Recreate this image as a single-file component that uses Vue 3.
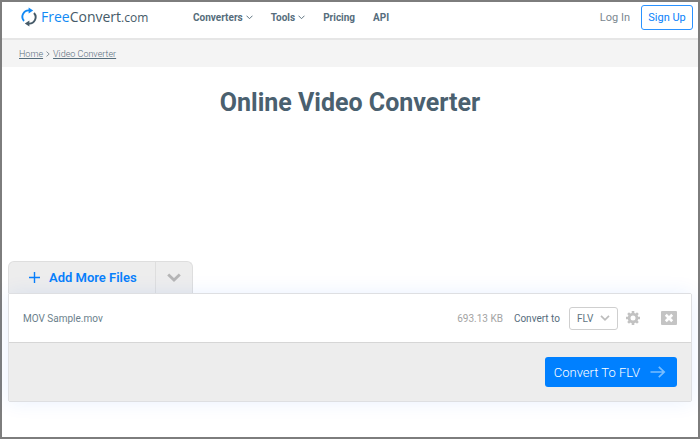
<script setup>
import { ref } from 'vue'

const menu = [
  { label: 'Converters', drop: true },
  { label: 'Tools', drop: true },
  { label: 'Pricing', drop: false },
  { label: 'API', drop: false },
]
const file = { name: 'MOV Sample.mov', size: '693.13 KB' }
const format = ref('FLV')
</script>

<template>
  <div class="page">
    <header class="header">
      <a class="logo" href="#">
        <svg class="logo-mark" width="16" height="20" viewBox="0 0 16 20">
          <path d="M3 14A6.4 6.4 0 0 1 8.4 3.4" fill="none" stroke="#128af5" stroke-width="1.9" />
          <path d="M7.6 0.4L12.2 3.4L7.6 6.4Z" fill="#128af5" />
          <path d="M13 6A6.4 6.4 0 0 1 7.6 16.6" fill="none" stroke="#455a68" stroke-width="1.9" />
          <path d="M8.4 13.6L3.8 16.6L8.4 19.6Z" fill="#455a68" />
        </svg>
        <span class="logo-text"><span class="free">Free</span>Convert<span class="com">.com</span></span>
      </a>
      <nav class="menu">
        <a v-for="item in menu" :key="item.label" href="#">
          {{ item.label }}
          <svg v-if="item.drop" width="7" height="5" viewBox="0 0 7 5">
            <path d="M0.5 0.7L3.5 3.7L6.5 0.7" fill="none" stroke="#607582" />
          </svg>
        </a>
      </nav>
      <div class="account">
        <a class="login" href="#">Log In</a>
        <button class="signup" type="button">Sign Up</button>
      </div>
    </header>

    <nav class="crumbs" aria-label="Breadcrumb">
      <a href="#">Home</a>
      <svg width="4" height="6" viewBox="0 0 4 6">
        <path d="M0.5 0.6L3.2 3L0.5 5.4" fill="none" stroke="#8b969d" />
      </svg>
      <a href="#">Video Converter</a>
    </nav>

    <main class="main">
      <h1>Online Video Converter</h1>
      <div class="panel">
        <div class="tab">
          <button class="add" type="button">
            <svg width="11" height="11" viewBox="0 0 11 11">
              <path d="M5.5 0V11M0 5.5H11" stroke="#087ffb" stroke-width="1.4" />
            </svg>
            Add More Files
          </button>
          <button class="more" type="button" aria-label="More sources">
            <svg width="14" height="9" viewBox="0 0 14 9">
              <path d="M1.2 1.4L7 7L12.8 1.4" fill="none" stroke="#b5b5b5" stroke-width="2.8" />
            </svg>
          </button>
        </div>
        <section class="card">
          <div class="file">
            <span class="name">{{ file.name }}</span>
            <span class="size">{{ file.size }}</span>
            <label for="format">Convert to</label>
            <span class="select">
              <select id="format" v-model="format">
                <option>FLV</option>
                <option>MP4</option>
                <option>AVI</option>
              </select>
              <svg width="10" height="6" viewBox="0 0 10 6">
                <path d="M1 0.8L5 4.8L9 0.8" fill="none" stroke="#bdbdbd" stroke-width="1.7" />
              </svg>
            </span>
            <button class="icon" type="button" aria-label="Settings">
              <svg width="14" height="14" viewBox="0 0 14 14">
                <circle cx="7" cy="7" r="3.9" fill="none" stroke="#c2c2c2" stroke-width="2.8" />
                <path d="M7 0V2.5M7 11.5V14M0 7H2.5M11.5 7H14M2.1 2.1L3.8 3.8M10.2 10.2L11.9 11.9M2.1 11.9L3.8 10.2M10.2 3.8L11.9 2.1" stroke="#c2c2c2" stroke-width="2.6" />
              </svg>
            </button>
            <button class="icon remove" type="button" aria-label="Remove file">
              <svg width="16" height="14" viewBox="0 0 16 14">
                <rect width="16" height="14" rx="1" fill="#c4c4c4" />
                <path d="M4.8 3.8L11.2 10.2M11.2 3.8L4.8 10.2" stroke="#fff" stroke-width="2.7" />
              </svg>
            </button>
          </div>
          <div class="actions">
            <button class="convert" type="button">
              Convert To FLV
              <svg width="16" height="12" viewBox="0 0 16 12">
                <path d="M0.5 6H14M8.8 0.8L14.2 6L8.8 11.2" fill="none" stroke="#78bdff" stroke-width="1.7" />
              </svg>
            </button>
          </div>
        </section>
      </div>
    </main>
  </div>
</template>

<style>
body {
  background: #fff;
}
</style>

<style scoped>
.page {
  box-sizing: border-box;
  min-height: 100vh;
  border: 2px solid #7d7d7d;
  font-family: Roboto, "Liberation Sans", sans-serif;
  font-size: 11px;
  color: #566d7c;
}
a {
  color: inherit;
  text-decoration: none;
}
button {
  padding: 0;
  border: 0;
  background: none;
  font: inherit;
  color: inherit;
}
svg {
  display: block;
  flex: none;
}
.header {
  display: flex;
  align-items: center;
  box-sizing: border-box;
  height: 38px;
  padding: 0 5px 6px 19px;
  border-bottom: 2px solid #e6e6e6;
}
.logo {
  display: flex;
  align-items: center;
  gap: 4px;
  width: 172px;
}
.logo-text {
  font-family: "Open Sans", sans-serif;
  font-size: 14px;
  line-height: 20px;
  font-weight: 500;
  color: #455a68;
}
.free {
  color: #128af5;
}
.com {
  font-size: 12px;
}
.menu {
  display: flex;
  gap: 18px;
  font-size: 10px;
  font-weight: 700;
}
.menu a {
  display: flex;
  align-items: center;
  gap: 3px;
}
.account {
  display: flex;
  align-items: center;
  gap: 11px;
  margin-left: auto;
}
.login {
  color: #7b8790;
}
.signup {
  width: 52px;
  height: 25px;
  border: 1px solid #2a92ff;
  border-radius: 3px;
  color: #087ffb;
}
.crumbs {
  display: flex;
  align-items: center;
  gap: 3px;
  height: 27px;
  padding-left: 17px;
  background: #f4f4f4;
  font-size: 9px;
  font-weight: 300;
}
.crumbs a {
  text-decoration: underline;
}
.main {
  padding: 20px 6px 33px;
}
h1 {
  margin: 0 0 142px;
  font-size: 25px;
  line-height: 32px;
  text-align: center;
  color: #4a606f;
}
.panel {
  display: flex;
  flex-direction: column;
  align-items: flex-start;
}
.tab {
  display: flex;
  height: 32px;
  border: 1px solid #dedede;
  border-bottom: 0;
  border-radius: 6px 6px 0 0;
  background: #ededed;
  box-sizing: border-box;
}
.add {
  display: flex;
  align-items: center;
  gap: 9px;
  padding: 0 18px 0 20px;
  font-size: 13px;
  font-weight: 600;
  color: #087ffb;
}
.more {
  display: flex;
  align-items: center;
  justify-content: center;
  width: 37px;
  border-left: 1px solid #dedede;
}
.card {
  align-self: stretch;
  border: 1px solid #dedfe2;
  border-radius: 0 2px 2px 2px;
  box-shadow: 0 0 20px #0060ff17;
  overflow: hidden;
}
.file {
  display: flex;
  align-items: center;
  height: 48px;
  padding: 0 14px;
  background: #fff;
  font-size: 10px;
}
.name {
  flex: 1;
  color: #6b7f8c;
}
.size {
  margin-right: 11px;
  color: #a3a3a3;
}
.select {
  display: grid;
  grid-template-columns: 1fr 10px 7px;
  align-items: center;
  width: 49px;
  height: 23px;
  margin: 0 8px 0 9px;
  box-sizing: border-box;
  border: 1px solid #cfcfcf;
  border-radius: 3px;
}
.select select {
  grid-area: 1 / 1 / 2 / 4;
  width: 100%;
  height: 21px;
  padding: 0 0 0 7px;
  border: 0;
  appearance: none;
  background: none;
  font: inherit;
  color: #607582;
}
.select svg {
  grid-area: 1 / 2;
  pointer-events: none;
}
.remove {
  margin-left: 21px;
}
.actions {
  display: flex;
  justify-content: flex-end;
  padding: 14px;
  border-top: 1px solid #d6d6d6;
  background: #ededed;
}
.convert {
  display: flex;
  align-items: center;
  gap: 10px;
  height: 30px;
  padding: 0 11px 0 9px;
  border-radius: 3px;
  background: #0080ff;
  font-size: 13px;
  font-weight: 300;
  color: #fff;
}
</style>
